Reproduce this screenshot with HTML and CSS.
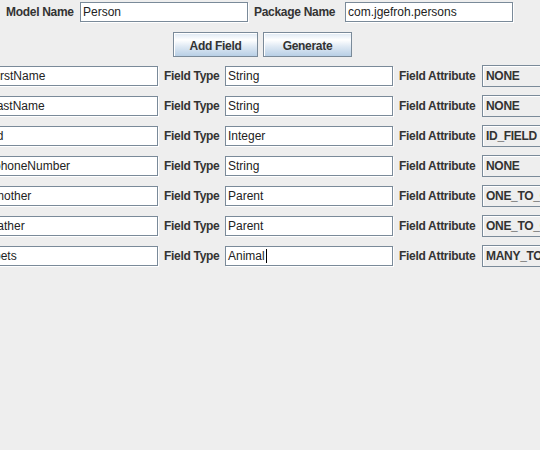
FILE: index.html
```html
<!DOCTYPE html>
<html>
<head>
<meta charset="utf-8">
<link rel="stylesheet" href="styles.css">
</head>
<body>
<div class="app">
  <div class="top">
    <span class="lbl lbl-model">Model Name</span>
    <div class="field">Person</div>
    <span class="lbl lbl-pkg">Package Name</span>
    <div class="field">com.jgefroh.persons</div>
  </div>
  <div class="buttons">
    <div class="btn btn-add">Add Field</div>
    <div class="btn btn-gen">Generate</div>
  </div>
  <div class="rows">
    <div class="row">
      <div class="field name">firstName</div>
      <span class="lbl lbl-type">Field Type</span>
      <div class="field">String</div>
      <span class="lbl lbl-attr">Field Attribute</span>
      <div class="combo">NONE</div>
    </div>
    <div class="row">
      <div class="field name">lastName</div>
      <span class="lbl lbl-type">Field Type</span>
      <div class="field">String</div>
      <span class="lbl lbl-attr">Field Attribute</span>
      <div class="combo">NONE</div>
    </div>
    <div class="row">
      <div class="field name">id</div>
      <span class="lbl lbl-type">Field Type</span>
      <div class="field">Integer</div>
      <span class="lbl lbl-attr">Field Attribute</span>
      <div class="combo">ID_FIELD</div>
    </div>
    <div class="row">
      <div class="field name">phoneNumber</div>
      <span class="lbl lbl-type">Field Type</span>
      <div class="field">String</div>
      <span class="lbl lbl-attr">Field Attribute</span>
      <div class="combo">NONE</div>
    </div>
    <div class="row">
      <div class="field name">mother</div>
      <span class="lbl lbl-type">Field Type</span>
      <div class="field">Parent</div>
      <span class="lbl lbl-attr">Field Attribute</span>
      <div class="combo">ONE_TO_ONE</div>
    </div>
    <div class="row">
      <div class="field name">father</div>
      <span class="lbl lbl-type">Field Type</span>
      <div class="field">Parent</div>
      <span class="lbl lbl-attr">Field Attribute</span>
      <div class="combo">ONE_TO_ONE</div>
    </div>
    <div class="row">
      <div class="field name">pets</div>
      <span class="lbl lbl-type">Field Type</span>
      <div class="field">Animal<span class="caret"></span></div>
      <span class="lbl lbl-attr">Field Attribute</span>
      <div class="combo">MANY_TO_ONE</div>
    </div>
  </div>
</div>
</body>
</html>
```

FILE: styles.css
```css
html, body {
  margin: 0;
  padding: 0;
  background: #eeeeee;
  overflow: hidden;
}
body {
  width: 540px;
  height: 450px;
  font-family: "Liberation Sans", Arial, sans-serif;
  font-size: 12px;
}
.app {
  display: flex;
  flex-direction: column;
}
.top {
  display: flex;
  align-items: center;
  height: 20px;
  margin-top: 2px;
  padding-left: 6px;
}
.lbl {
  font-weight: bold;
  color: #333333;
  letter-spacing: -0.3px;
  white-space: nowrap;
  flex: none;
}
.lbl-model { width: 68px; margin-right: 6px; }
.lbl-pkg { width: 86px; margin-left: 6px; margin-right: 5px; }
.lbl-type { width: 56px; margin-left: 6px; margin-right: 5px; }
.lbl-attr { width: 77px; margin-left: 6px; margin-right: 6px; }
.field {
  box-sizing: border-box;
  width: 168px;
  height: 20px;
  flex: none;
  background: #ffffff;
  border: 1px solid #7a8a99;
  box-shadow: 1px 1px 0 #ffffff;
  padding: 0 2px;
  color: #222222;
  line-height: 18px;
  white-space: nowrap;
  overflow: hidden;
}
.field.name {
  margin-left: -10px;
  padding-left: 3px;
}
.caret {
  display: inline-block;
  width: 1px;
  height: 14px;
  background: #000000;
  vertical-align: -3px;
  margin-left: 1px;
}
.buttons {
  display: flex;
  gap: 5px;
  margin-top: 10px;
  padding-left: 173px;
}
.btn {
  box-sizing: border-box;
  height: 25px;
  padding-top: 2px;
  border: 1px solid #7a8a99;
  box-shadow: inset 1px 1px 0 #ffffff;
  background: linear-gradient(#dde8f3 0%, #ffffff 30%, #dde8f3 60%, #b8cfe5 100%);
  font-weight: bold;
  color: #333333;
  letter-spacing: -0.3px;
  display: flex;
  align-items: center;
  justify-content: center;
}
.btn-add { width: 85px; }
.btn-gen { width: 89px; }
.rows {
  display: flex;
  flex-direction: column;
  gap: 8px;
  margin-top: 8px;
}
.row {
  display: flex;
  align-items: center;
  height: 22px;
}
.combo {
  box-sizing: border-box;
  height: 22px;
  width: 100px;
  flex: none;
  border: 1px solid #7a8a99;
  box-shadow: inset 1px 1px 0 #ffffff;
  background: #eeeeee;
  font-weight: bold;
  color: #333333;
  letter-spacing: -0.3px;
  padding-left: 3px;
  line-height: 20px;
  white-space: nowrap;
  overflow: hidden;
}
```
